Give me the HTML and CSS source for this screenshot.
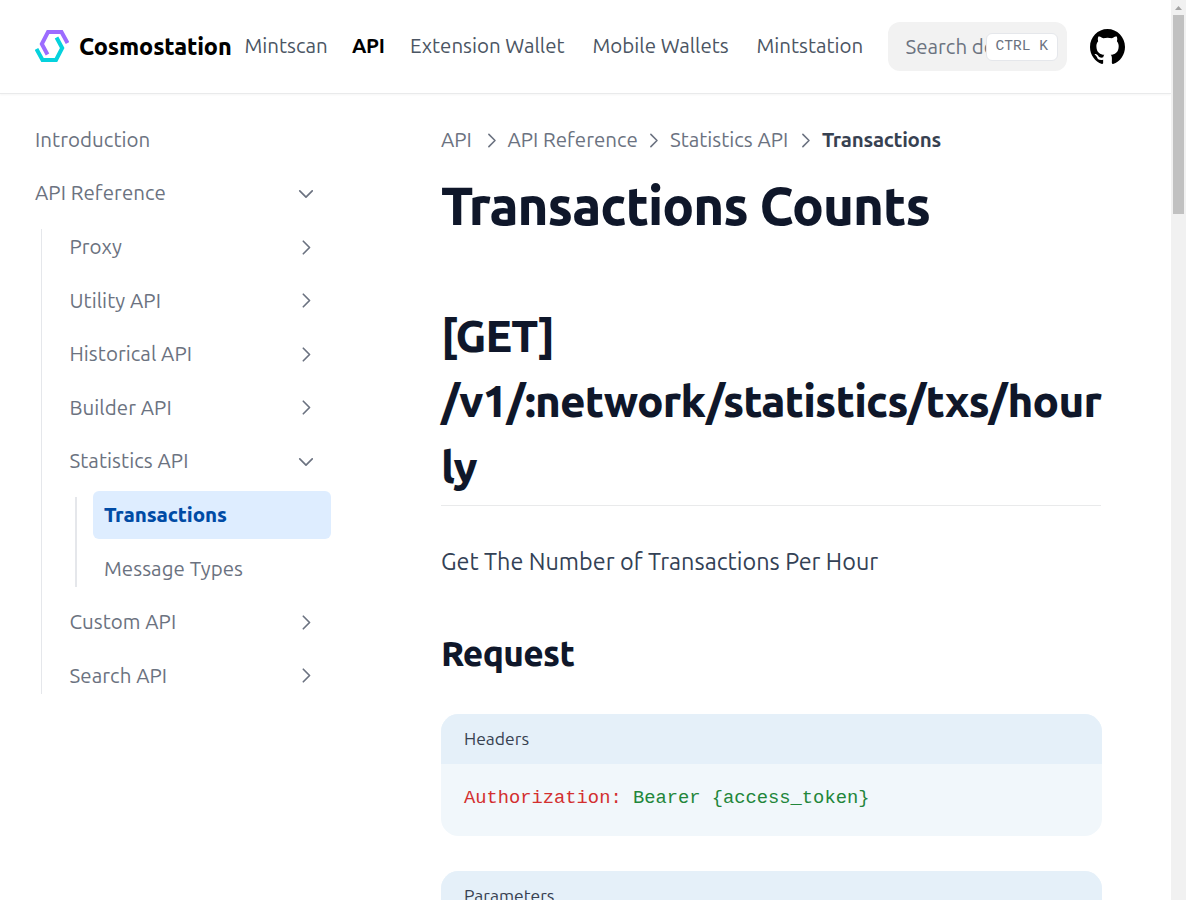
FILE: index.html
```html
<!DOCTYPE html>
<html lang="en">
<head>
<meta charset="utf-8">
<title>Transactions – Cosmostation</title>
<link rel="stylesheet" href="styles.css">
</head>
<body>
<svg class="defs" width="0" height="0"><symbol id="chevron" viewBox="0 0 24 24"><path d="M9 5l7 7-7 7" fill="none" stroke="currentColor" stroke-linecap="round" stroke-linejoin="round"/></symbol></svg>
<div class="page">
  <header class="navbar">
    <a class="brand"><svg class="logo" viewBox="0 0 34 32"><g fill="none" stroke-width="4"><path stroke="#9c6cff" d="M12.5 24.5 6.8 14 13 2H26.5L32.5 13"/><path stroke="#05d2dd" d="M21.5 7.5 27.2 18 21 30H7.5L1.5 19"/></g></svg><span>Cosmostation</span></a>
    <nav class="links">
      <a class="n1">Mintscan</a><a class="n2">API</a><a class="n3">Extension Wallet</a><a class="n4">Mobile Wallets</a><a class="n5">Mintstation</a>
    </nav>
    <div class="search"><span class="placeholder">Search do</span><kbd class="kbd">CTRL K</kbd></div>
    <svg class="github" viewBox="3 3 18 18"><path fill="#000" d="M12 3C7.0275 3 3 7.12937 3 12.2276C3 16.3109 5.57625 19.7597 9.15374 20.9824C9.60374 21.0631 9.77249 20.7863 9.77249 20.5441C9.77249 20.3249 9.76125 19.5982 9.76125 18.8254C7.5 19.2522 6.915 18.2602 6.735 17.7412C6.63375 17.4759 6.19499 16.6569 5.8125 16.4378C5.4975 16.2647 5.0475 15.838 5.80124 15.8264C6.51 15.8149 7.01625 16.4954 7.18499 16.7723C7.99499 18.1679 9.28875 17.7758 9.80625 17.5335C9.885 16.9337 10.1212 16.53 10.38 16.2993C8.3775 16.0687 6.285 15.2728 6.285 11.7432C6.285 10.7397 6.63375 9.9092 7.20749 9.26326C7.1175 9.03257 6.8025 8.08674 7.2975 6.81794C7.2975 6.81794 8.05125 6.57571 9.77249 7.76377C10.4925 7.55615 11.2575 7.45234 12.0225 7.45234C12.7875 7.45234 13.5525 7.55615 14.2725 7.76377C15.9937 6.56418 16.7475 6.81794 16.7475 6.81794C17.2424 8.08674 16.9275 9.03257 16.8375 9.26326C17.4113 9.9092 17.76 10.7281 17.76 11.7432C17.76 15.2843 15.6563 16.0687 13.6537 16.2993C13.98 16.5877 14.2613 17.1414 14.2613 18.0065C14.2613 19.2407 14.25 20.2326 14.25 20.5441C14.25 20.7863 14.4188 21.0746 14.8688 20.9824C16.6554 20.364 18.2079 19.1866 19.3078 17.6162C20.4077 16.0457 20.9995 14.1611 21 12.2276C21 7.12937 16.9725 3 12 3Z"/></svg>
  </header>
  <div class="layout">
    <aside class="sidebar">
      <div class="item"><span>Introduction</span></div>
      <div class="item"><span>API Reference</span><svg class="chev open"><use href="#chevron"/></svg></div>
      <div class="sub">
        <div class="item"><span>Proxy</span><svg class="chev"><use href="#chevron"/></svg></div>
        <div class="item"><span>Utility API</span><svg class="chev"><use href="#chevron"/></svg></div>
        <div class="item"><span>Historical API</span><svg class="chev"><use href="#chevron"/></svg></div>
        <div class="item"><span>Builder API</span><svg class="chev"><use href="#chevron"/></svg></div>
        <div class="item"><span>Statistics API</span><svg class="chev open"><use href="#chevron"/></svg></div>
        <div class="sub nested">
          <div class="item active"><span>Transactions</span></div>
          <div class="item"><span>Message Types</span></div>
        </div>
        <div class="item"><span>Custom API</span><svg class="chev"><use href="#chevron"/></svg></div>
        <div class="item"><span>Search API</span><svg class="chev"><use href="#chevron"/></svg></div>
      </div>
    </aside>
    <main class="content">
      <div class="crumbs"><span class="c1">API</span><svg class="sep"><use href="#chevron"/></svg><span class="c2">API Reference</span><svg class="sep"><use href="#chevron"/></svg><span class="c3">Statistics API</span><svg class="sep"><use href="#chevron"/></svg><span class="c4">Transactions</span></div>
      <h1>Transactions Counts</h1>
      <h2>[GET]<br>/v1/:network/statistics/txs/hour<br>ly</h2>
      <p class="lead">Get The Number of Transactions Per Hour</p>
      <h3>Request</h3>
      <section class="card">
        <div class="card-title">Headers</div>
        <pre class="code"><span class="key">Authorization:</span> <span class="val">Bearer {access_token}</span></pre>
      </section>
      <section class="card">
        <div class="card-title">Parameters</div>
        <pre class="code"></pre>
      </section>
    </main>
  </div>
</div>
<div class="scrollbar"><div class="arrow"></div><div class="thumb"></div></div>
</body>
</html>
```
FILE: styles.css
```css
* { box-sizing: border-box; }
body { margin: 0; height: 900px; overflow: hidden; display: flex; background: #fff; font: 430 20.5px/29.25px Ubuntu, "Noto Sans", sans-serif; color: #6b7280; }
span, a { white-space: nowrap; }
.defs { position: absolute; }
.page { width: 1171px; height: 900px; overflow: hidden; }
.navbar { height: 94px; display: flex; align-items: center; padding: 0 0 1px 35px; border-bottom: 1px solid #e9eaeb; box-shadow: 0 1px 2px rgba(0,0,0,.04); }
.brand { width: 209.5px; display: flex; align-items: center; gap: 10px; color: #000; font-size: 23.4px; font-weight: 800; letter-spacing: -.13px; }
.brand span { padding-top: 1px; }
.logo { width: 34px; height: 32px; flex: none; }
.links { width: 643.5px; display: flex; color: #4b5563; }
.n1 { width: 107.5px; } .n2 { width: 58px; color: #000; font-weight: 600; letter-spacing: -.3px; } .n3 { width: 182.5px; } .n4 { width: 164px; }
.search { width: 179px; height: 49px; flex: none; display: flex; align-items: center; background: #f2f2f2; border-radius: 12px; padding: 1px 9.5px 0 17.5px; color: #6b7280; }
.placeholder { width: 81px; flex: none; overflow: hidden; }
.kbd { width: 71.5px; margin-left: -.5px; height: 28px; flex: none; border: 1px solid #e5e7eb; border-radius: 6px; background: #fff; font: 14.6px/25px "Liberation Mono", monospace; text-align: center; }
.github { width: 35px; height: 35px; margin-left: 23px; flex: none; }
.layout { display: flex; }
.sidebar { width: 331px; padding: 22px 0 0 23px; }
.item { height: 47.8px; margin-bottom: 5.8px; padding: 0 13px 1px 12px; display: flex; align-items: center; justify-content: space-between; border-radius: 6px; letter-spacing: .05px; }
.chev { width: 24px; height: 24px; stroke-width: 1.9; transform: translateY(.5px) scale(.89); }
.open { transform: translateY(.5px) rotate(90deg) scale(.89); }
.sub { margin-left: 18px; padding-left: 16.5px; background: linear-gradient(#e5e7eb, #e5e7eb) 0 6px / 1px calc(100% - 12px) no-repeat; }
.nested { margin-left: 17.5px; padding-left: 17.5px; background-size: 2px calc(100% - 12px); }
.nested .item { padding-left: 11.5px; }
.nested .active { background: #deedff; color: #004ba5; font-weight: 800; letter-spacing: -.1px; }
.content { margin-left: 110px; width: 660px; padding-top: 31.5px; }
.crumbs { height: 29px; display: flex; align-items: center; }
.sep { width: 21px; height: 21px; flex: none; stroke-width: 1.8; margin-right: 6px; }
.c1 { width: 39.5px; } .c2 { width: 135.5px; } .c3 { width: 125px; } .c4 { color: #374151; font-weight: 600; letter-spacing: -.25px; }
h1, h2, h3, p { margin: 0; white-space: nowrap; }
h1, h2, h3 { font-weight: 800; color: #0f172a; }
h1 { margin-top: 19px; font-size: 52.65px; line-height: 64px; letter-spacing: -.97px; }
h2 { margin-top: 65px; height: 203.5px; font-size: 43.88px; line-height: 65.5px; letter-spacing: -.82px; border-bottom: 1px solid #e9eaeb; }
.lead { margin-top: 35px; font-size: 23.4px; line-height: 41px; color: #334155; letter-spacing: .02px; }
h3 { margin-top: 47px; font-size: 35.1px; line-height: 48px; letter-spacing: -.65px; }
.card { margin-top: 37px; margin-right: -1px; border-radius: 17.5px; overflow: hidden; background: #f1f7fb; height: 122px; }
.card + .card { margin-top: 35px; }
.card-title { height: 50px; padding-left: 23px; background: #e5f0f9; color: #374151; font-size: 17.5px; line-height: 50px; }
.code { margin: 0; padding: 21px 23px; font: 18.77px/26px "Liberation Mono", monospace; }
.key { color: #d32f2f; } .val { color: #22863a; }
.scrollbar { width: 15px; height: 900px; background: #f1f1f1; }
.arrow { width: 7px; height: 4px; margin: 6px 0 0 4px; background: #a3a3a3; clip-path: polygon(50% 0, 100% 100%, 0 100%); }
.thumb { width: 11px; height: 199px; margin: 5px 0 0 2px; background: #c1c1c1; }
```
